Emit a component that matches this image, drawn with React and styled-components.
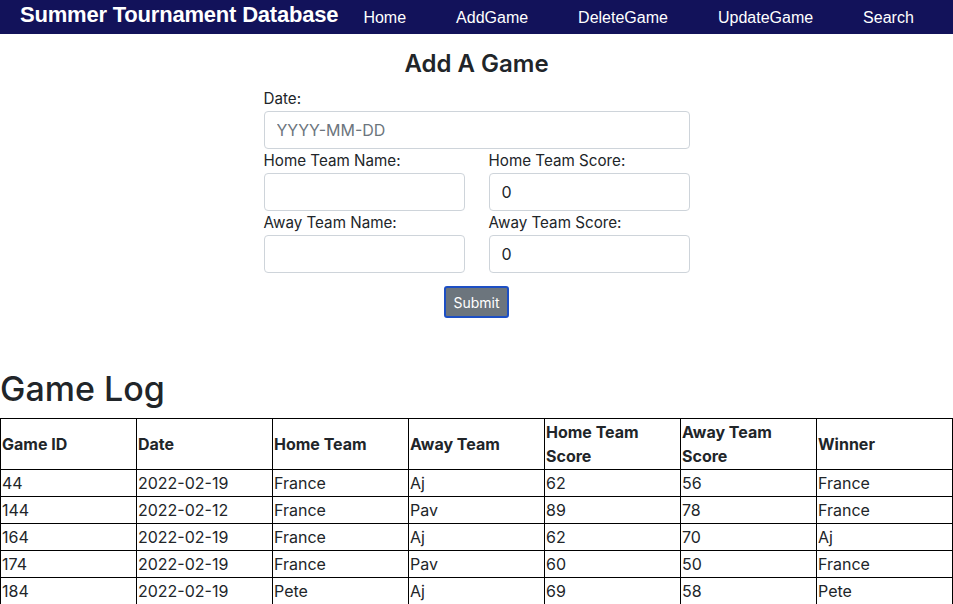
import React from 'react';
import styled, { createGlobalStyle } from 'styled-components';

const games = [
  { id: 44, date: '2022-02-19', home: 'France', away: 'Aj', hs: 62, as: 56, winner: 'France' },
  { id: 144, date: '2022-02-12', home: 'France', away: 'Pav', hs: 89, as: 78, winner: 'France' },
  { id: 164, date: '2022-02-19', home: 'France', away: 'Aj', hs: 62, as: 70, winner: 'Aj' },
  { id: 174, date: '2022-02-19', home: 'France', away: 'Pav', hs: 60, as: 50, winner: 'France' },
  { id: 184, date: '2022-02-19', home: 'Pete', away: 'Aj', hs: 69, as: 58, winner: 'Pete' },
];

const links = ['Home', 'AddGame', 'DeleteGame', 'UpdateGame', 'Search'];

function App() {
  return (
    <>
      <GlobalStyle />
      <Navbar>
        <Brand>Summer Tournament Database</Brand>
        <NavLinks>
          {links.map((l) => (
            <NavLink key={l}>{l}</NavLink>
          ))}
        </NavLinks>
      </Navbar>

      <FormWrap>
        <FormTitle>Add A Game</FormTitle>
        <Field>
          <Label>Date:</Label>
          <Input placeholder="YYYY-MM-DD" />
        </Field>
        <Row>
          <Field>
            <Label>Home Team Name:</Label>
            <Input />
          </Field>
          <Field>
            <Label>Home Team Score:</Label>
            <Input defaultValue="0" />
          </Field>
        </Row>
        <Row>
          <Field>
            <Label>Away Team Name:</Label>
            <Input />
          </Field>
          <Field>
            <Label>Away Team Score:</Label>
            <Input defaultValue="0" />
          </Field>
        </Row>
        <SubmitButton>Submit</SubmitButton>
      </FormWrap>

      <LogTitle>Game Log</LogTitle>
      <Table>
        <thead>
          <tr>
            <Th>Game ID</Th>
            <Th>Date</Th>
            <Th>Home Team</Th>
            <Th>Away Team</Th>
            <Th>Home Team Score</Th>
            <Th>Away Team Score</Th>
            <Th>Winner</Th>
          </tr>
        </thead>
        <tbody>
          {games.map((g) => (
            <tr key={g.id}>
              <Td>{g.id}</Td>
              <Td>{g.date}</Td>
              <Td>{g.home}</Td>
              <Td>{g.away}</Td>
              <Td>{g.hs}</Td>
              <Td>{g.as}</Td>
              <Td>{g.winner}</Td>
            </tr>
          ))}
        </tbody>
      </Table>
    </>
  );
}

export default App;

const GlobalStyle = createGlobalStyle`
  * { box-sizing: border-box; }
  body {
    margin: 0;
    font-family: Inter, "Noto Sans", sans-serif;
    font-size: 16px;
    line-height: 1.5;
    color: #212529;
    background: #fff;
  }
`;

const Navbar = styled.nav`
  display: flex;
  align-items: center;
  height: 34px;
  padding-left: 20px;
  background: #12125a;
  font-family: "Liberation Sans", Arial, sans-serif;
  color: #fff;
`;

const Brand = styled.div`
  font-size: 22px;
  font-weight: 700;
  letter-spacing: -0.2px;
  margin-top: -6px;
`;

const NavLinks = styled.div`
  display: flex;
`;

const NavLink = styled.a`
  padding: 0 25px;
  font-size: 16px;
  color: #fff;
  cursor: pointer;
  margin-top: 1px;
`;

const FormWrap = styled.form`
  width: 426px;
  margin: 13px auto 0;
  display: flex;
  flex-direction: column;
`;

const FormTitle = styled.h3`
  margin: 1px 0 7px;
  text-align: center;
  font-size: 24px;
  font-weight: 600;
  line-height: 32px;
`;

const Row = styled.div`
  display: grid;
  grid-template-columns: minmax(0, 1fr) minmax(0, 1fr);
  column-gap: 24px;
`;

const Field = styled.div`
  display: flex;
  flex-direction: column;
  min-width: 0;
`;

const Label = styled.label`
  font-size: 15.2px;
  line-height: 24px;
`;

const Input = styled.input`
  width: 100%;
  height: 38px;
  padding: 6px 12px;
  font-family: inherit;
  font-size: 16px;
  color: #212529;
  border: 1px solid #ced4da;
  border-radius: 4px;
  outline: none;
  &::placeholder { color: #6c757d; }
`;

const SubmitButton = styled.button`
  align-self: center;
  margin-top: 13px;
  width: 65px;
  height: 32px;
  background: #6c757d;
  color: #fff;
  font-family: inherit;
  font-size: 14px;
  border: 2px solid #1d4fc4;
  border-radius: 3px;
  cursor: pointer;
`;

const LogTitle = styled.h1`
  margin: 49px 0 7px;
  font-size: 34px;
  font-weight: 500;
  line-height: 44px;
`;

const Table = styled.table`
  width: 100%;
  border-collapse: collapse;
  table-layout: fixed;
`;

const Th = styled.th`
  border: 1px solid #000;
  padding: 1px;
  text-align: left;
  font-weight: 700;
  line-height: 24px;
`;

const Td = styled.td`
  border: 1px solid #000;
  padding: 1px;
  line-height: 24px;
`;
